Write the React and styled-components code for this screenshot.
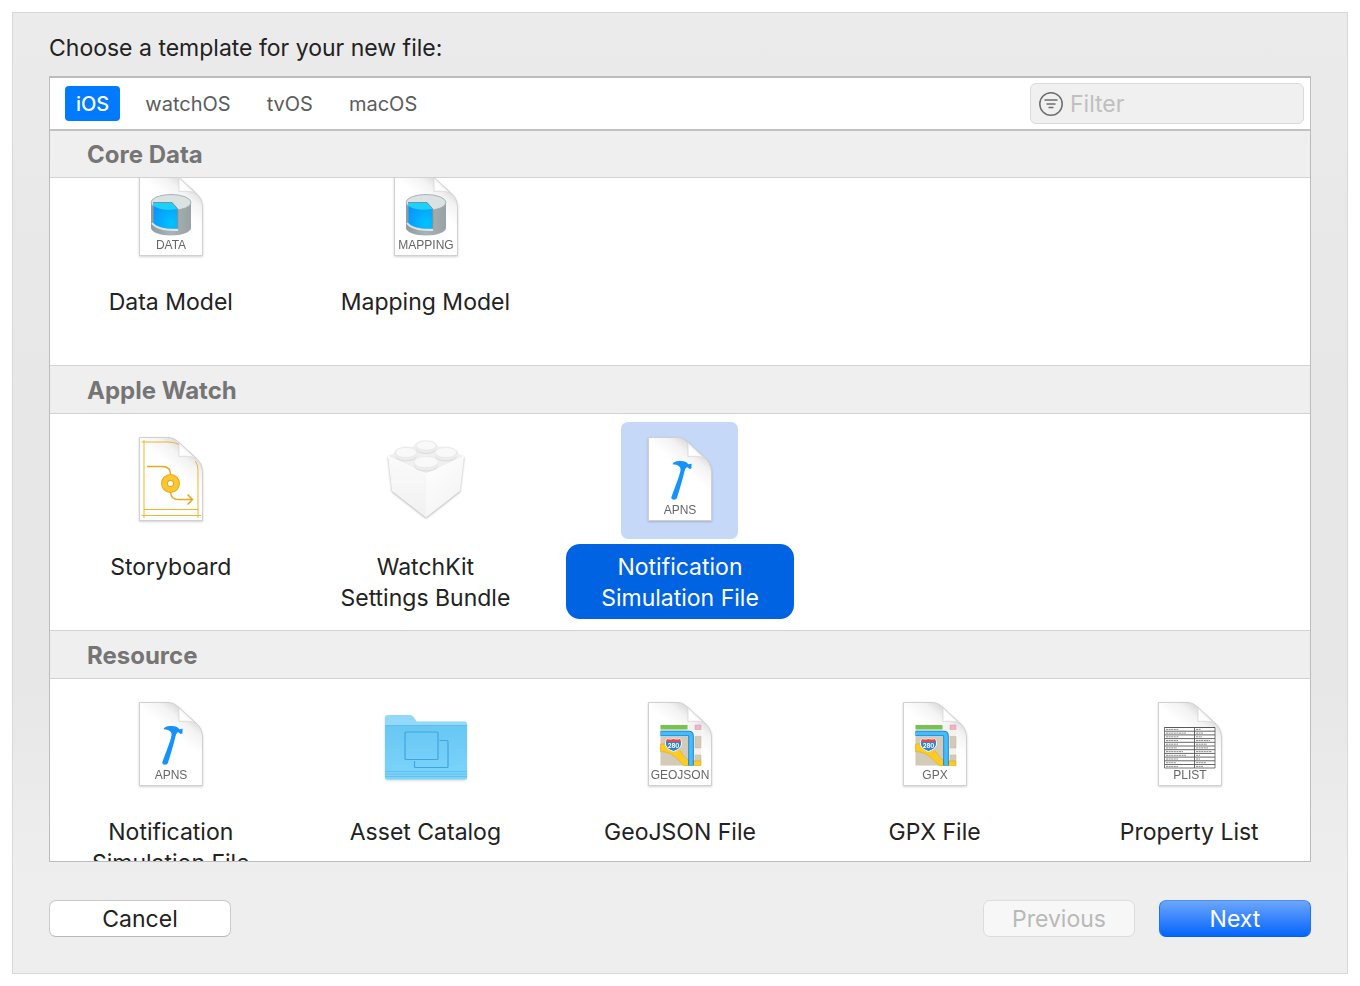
import styled, { createGlobalStyle, css } from "styled-components";
import { useLayoutEffect, useRef, useState } from "react";

const platforms = ["iOS", "watchOS", "tvOS", "macOS"];

// template sections
const sections = [
    {
        title: "Core Data",
        items: [
            { id: "data", name: "Data Model", icon: () => <DatabaseIcon tag="DATA" /> },
            { id: "mapping", name: "Mapping Model", icon: () => <DatabaseIcon tag="MAPPING" /> },
        ],
    },
    {
        title: "Apple Watch",
        items: [
            { id: "storyboard", name: "Storyboard", icon: () => <StoryboardIcon /> },
            { id: "bundle", name: "WatchKit Settings Bundle", icon: () => <BrickIcon /> },
            { id: "watch-apns", name: "Notification Simulation File", icon: () => <HammerIcon /> },
        ],
    },
    {
        title: "Resource",
        items: [
            { id: "apns", name: "Notification Simulation File", icon: () => <HammerIcon /> },
            { id: "assets", name: "Asset Catalog", icon: () => <FolderIcon /> },
            { id: "geojson", name: "GeoJSON File", icon: () => <MapIcon tag="GEOJSON" /> },
            { id: "gpx", name: "GPX File", icon: () => <MapIcon tag="GPX" /> },
            { id: "plist", name: "Property List", icon: () => <PlistIcon /> },
        ],
    },
];

const App = () => {
    const [platform, setPlatform] = useState("iOS");
    const [selected, setSelected] = useState("watch-apns");
    const listRef = useRef();

    useLayoutEffect(() => {
        listRef.current.scrollTop = 29;
    }, []);

    return (
        <>
            <GlobalStyle />
            <IconDefs />
            <Dialog>
                <Title>Choose a template for your new file:</Title>

                <Panel>
                    <Toolbar>
                        <Tabs>
                            {platforms.map((p) => (
                                <Tab key={p} type="button" $active={p === platform} onClick={() => setPlatform(p)}>
                                    {p}
                                </Tab>
                            ))}
                        </Tabs>
                        <FilterBox>
                            <FilterIcon />
                            <FilterInput type="text" placeholder="Filter" aria-label="Filter" />
                        </FilterBox>
                    </Toolbar>

                    <TemplateList ref={listRef}>
                        {sections.map((section) => (
                            <section key={section.title}>
                                <SectionTitle>{section.title}</SectionTitle>
                                <Grid>
                                    {section.items.map((item) => (
                                        <Template
                                            key={item.id}
                                            type="button"
                                            aria-pressed={item.id === selected}
                                            onClick={() => setSelected(item.id)}
                                        >
                                            <Thumb $active={item.id === selected}>{item.icon()}</Thumb>
                                            <Label $active={item.id === selected}>
                                                <LabelText>{item.name}</LabelText>
                                            </Label>
                                        </Template>
                                    ))}
                                </Grid>
                            </section>
                        ))}
                    </TemplateList>
                </Panel>

                <Footer>
                    <CancelButton type="button">Cancel</CancelButton>
                    <FooterRight>
                        <PushButton type="button" disabled>Previous</PushButton>
                        <NextButton type="button">Next</NextButton>
                    </FooterRight>
                </Footer>
            </Dialog>
        </>
    );
};

export default App;

// shared gradients
const IconDefs = () => (
    <DefsSvg aria-hidden="true">
        <defs>
            <linearGradient id="paper" gradientUnits="userSpaceOnUse" x1="77" y1="27" x2="61" y2="47">
                <stop offset="0" stopColor="#d9d9d9" />
                <stop offset="0.4" stopColor="#f3f3f3" />
                <stop offset="1" stopColor="#ffffff" />
            </linearGradient>
            <linearGradient id="curl" gradientUnits="userSpaceOnUse" x1="67" y1="36" x2="76" y2="27">
                <stop offset="0" stopColor="#ffffff" />
                <stop offset="0.7" stopColor="#fdfdfd" />
                <stop offset="1" stopColor="#e4e4e4" />
            </linearGradient>
            <linearGradient id="tank" x1="0" y1="0" x2="1" y2="0">
                <stop offset="0" stopColor="#8f9c9f" />
                <stop offset="0.5" stopColor="#a9b3b5" />
                <stop offset="1" stopColor="#98a2a4" />
            </linearGradient>
            <radialGradient id="water" cx="0.75" cy="0.8" r="0.9">
                <stop offset="0" stopColor="#00c4ff" />
                <stop offset="1" stopColor="#0b92fb" />
            </radialGradient>
            <linearGradient id="folder" x1="0" y1="0" x2="0" y2="1">
                <stop offset="0" stopColor="#68c7f4" />
                <stop offset="1" stopColor="#7dd4fa" />
            </linearGradient>
            <linearGradient id="brickLeft" x1="0" y1="0" x2="0" y2="1">
                <stop offset="0" stopColor="#fafafa" />
                <stop offset="1" stopColor="#f1f1f1" />
            </linearGradient>
            <linearGradient id="brickRight" x1="0" y1="0" x2="0.6" y2="1">
                <stop offset="0" stopColor="#ffffff" />
                <stop offset="1" stopColor="#f3f3f3" />
            </linearGradient>
        </defs>
    </DefsSvg>
);

// blank document with a curled corner
const Page = ({ tag, children }) => (
    <PageSvg viewBox="0 0 117 117" aria-hidden="true">
        <path
            d="M27.5 15.5H56C61 15.5 64 18 67 20.5L83.5 35.5C88.5 40 90.5 45 90.5 51V98.5H27.5Z"
            fill="url(#paper)"
            stroke="#d0d0d0"
        />
        {children}
        <path d="M67 20.5V34.5C74 34 80 34 84.5 37Z" fill="url(#curl)" stroke="#d2d2d2" strokeWidth="0.7" />
        {tag && <PageTag x="59" y="92">{tag}</PageTag>}
    </PageSvg>
);

const DatabaseIcon = ({ tag }) => (
    <Page tag={tag}>
        <path d="M39 45.5V71C39 75 48 78.5 59 78.5S79 75 79 71V45.5Z" fill="url(#tank)" />
        <ellipse cx="59" cy="45.5" rx="20" ry="8" fill="#dbe2e4" stroke="#97a3a6" strokeWidth="0.8" />
        <path d="M40 66C44 71.5 53 73.5 66 73" fill="none" stroke="#d6e6ec" strokeWidth="2" />
        <path d="M41.5 45.5H60L65.5 52V71.5C54 72 45 70 41.5 66Z" fill="url(#water)" />
        <path d="M41.5 45.5H60L65.5 52C55 53.5 46 52.5 41.5 49Z" fill="#1bd2ff" />
        <path d="M41 45.5H60L65.8 52V71.5" fill="none" stroke="#7d8b90" strokeWidth="0.9" />
    </Page>
);

const StoryboardIcon = () => (
    <Page>
        <g fill="none" stroke="#edb72c">
            <path d="M32 18V96M29.5 20H56Q62 20 67 22.5M29.5 93.5H89M32 87.5H86M86 96V48Q86 43 83.5 39" />
            <path
                d="M35 44.5H50C56 44.5 58.5 47 58.5 52M58.5 70C59 75 61 77.5 66 77.5H80M75.5 72.5L80.5 77.5L75.5 82.5"
                stroke="#e5aa1f"
                strokeWidth="1.5"
            />
        </g>
        <circle cx="58.5" cy="61.5" r="6" fill="#ffffff" stroke="#e3a81c" strokeWidth="7" />
        <circle cx="58.5" cy="61.5" r="6" fill="none" stroke="#fcc72f" strokeWidth="5" />
    </Page>
);

const HammerIcon = () => (
    <Page tag="APNS">
        <path
            d="M51.5 42.3C52 40.5 54.5 39 58 39C62.5 38.6 65.500 39.500 67.300 42.200L70.600 41.800L70.400 46.600L68.500 47L66.600 45.300C65 45.300 64.300 46.600 63.600 49C61.500 58 58.700 67 56 75.800C55.300 78.400 50 78.200 50.300 75.600C53 67 58 56 59.600 48C59.800 44.500 57 42.800 51.500 42.300Z"
            fill="#1593fb"
        />
    </Page>
);

const roadNumber = "280";

const MapIcon = ({ tag }) => (
    <Page tag={tag}>
        <path d="M39.5 38H80V78.5H39.5Z" fill="#f4f2ee" />
        <path d="M39.5 50H67V78.5H39.5Z" fill="#d3cbb8" />
        <path d="M74 49.5H80V61H74ZM74 68H80V74H74Z" fill="#d3cbb8" stroke="#bdb5a2" strokeWidth="0.5" />
        <path d="M39.5 38H66.5V42.5H39.5Z" fill="#79c24d" />
        <path d="M74 38H80V42.5H74Z" fill="#edb5c4" stroke="#c99aa7" strokeWidth="0.5" />
        <path
            d="M39.5 57C50 56.5 56 59.500 60 65C63 70 66 74 72 74H80V78.5H63C56 72 52 65 39.5 64.5Z"
            fill="#fdcb22"
            stroke="#e0a91a"
            strokeWidth="0.6"
        />
        <path d="M39.5 46.5H67.500Q70 46.5 70 49V78.5" fill="none" stroke="#1672b5" strokeWidth="5.5" />
        <path d="M39.5 46.5H67.500Q70 46.5 70 49V78.5" fill="none" stroke="#42bdff" strokeWidth="3.8" />
        <path d="M46 52Q49 53 52.5 52Q56 53 59 52C62 56 61 62 52.5 64.5C44 62 43 56 46 52Z" fill="#3183d2" stroke="#ffffff" />
        <path d="M46 52Q49 53 52.5 52Q56 53 59 52L60 55H45Z" fill="#e5484e" />
        <RoadText x="52.5" y="60.5">{roadNumber}</RoadText>
    </Page>
);

// width of the key and of the value in each row
const plistRows = [
    [13, 5], [20, 7], [13, 6], [12, 14], [12, 11], [11, 12], [17, 16], [20, 4], [12, 4], [10, 10], [12, 7],
];

const PlistIcon = () => (
    <Page tag="PLIST">
        <path d="M33.5 40.5H84V81H33.5Z" fill="#ffffff" stroke="#555555" strokeWidth="0.8" />
        {plistRows.map(([a, b], i) => {
            const y = 40.5 + i * 3.7;
            return (
                <g key={i} fill="none">
                    <path d={`M33.5 ${y}H84`} stroke="#555555" strokeWidth="0.9" />
                    <path d={`M35 ${y + 1.9}h${a}M65 ${y + 1.9}h${b}`} stroke="#8c8c8c" strokeDasharray="2 0.6" />
                </g>
            );
        })}
        <path d="M63.5 40.5V81" stroke="#555555" strokeWidth="0.9" />
    </Page>
);

const brickStuds = [
    [59, 23.5, 10, 4.5],
    [39, 30.5, 10.5, 5],
    [79, 30.5, 10.5, 5],
    [59, 40, 12, 5.5],
];

const BrickIcon = () => (
    <BrickSvg viewBox="0 0 117 117" aria-hidden="true">
        <path d="M21 34.5L59 20L97 34.5L59 52Z" fill="#f0f0f0" />
        <path d="M21 34.5L59 52V95.5L25 69Z" fill="url(#brickLeft)" />
        <path d="M97 34.5L59 52V95.5L93 69Z" fill="url(#brickRight)" />
        <path d="M21 34.5L59 52L97 34.5" fill="none" stroke="#ffffff" />
        {brickStuds.map(([x, y, rx, ry]) => (
            <g key={`${x}-${y}`}>
                <ellipse cx={x} cy={y + 4} rx={rx} ry={ry} fill="#dadada" />
                <ellipse cx={x} cy={y + 3} rx={rx} ry={ry} fill="#ececec" />
                <ellipse cx={x} cy={y} rx={rx} ry={ry} fill="#f9f9f9" stroke="#e6e6e6" strokeWidth="0.6" />
            </g>
        ))}
    </BrickSvg>
);

const FolderIcon = () => (
    <PageSvg viewBox="0 0 117 117" aria-hidden="true">
        <path d="M18 31Q18 28 21 28H43Q45 28 46.5 30L49.5 34.5H97.5Q100 34.5 100 37V60H18Z" fill="#93d9fa" />
        <path d="M18 38.5H100V90Q100 92.5 97.5 92.5H20.5Q18 92.5 18 90Z" fill="url(#folder)" />
        <path d="M18 38.5H100" stroke="#5ab8e8" strokeWidth="0.8" />
        <path d="M18 84.5H100M18 87H100M18 89.5H100" stroke="#5dbdea" strokeWidth="0.8" />
        <g fill="none" stroke="#3fa5dc" strokeWidth="1.2">
            <rect x="38" y="45" width="33" height="27.5" rx="1" />
            <path d="M72.5 53.5H80Q81 53.5 81 54.5V79.5Q81 80.5 80 80.5H48.5Q47.5 80.5 47.5 79.5V74" />
        </g>
    </PageSvg>
);

const FilterIcon = () => (
    <FilterSvg viewBox="0 0 24 24" aria-hidden="true">
        <circle cx="12" cy="12" r="11.2" />
        <path d="M5.5 8H18.5M7.5 12H16.5M9.5 15.5H14.5" />
    </FilterSvg>
);

const GlobalStyle = createGlobalStyle`
    * {
        box-sizing: border-box;
    }
    body {
        margin: 12px;
        background-color: #ffffff;
        color: #222222;
        font-family: Inter, "Liberation Sans", sans-serif;
        font-size: 23px;
    }
    button, input {
        font: inherit;
        color: inherit;
    }
`;

const DefsSvg = styled.svg`
    position: absolute;
    width: 0;
    height: 0;
`;

const Dialog = styled.main`
    display: flex;
    flex-direction: column;
    height: calc(100vh - 24px);
    padding: 19px 36px 36px;
    border: 1px solid #d8d8d8;
    background: linear-gradient(#ebebeb, #e7e7e7 40%, #e8e7e7 70%, #eeeeee 90%);
`;

const Title = styled.h1`
    margin: 0 0 12px;
    font-size: 23px;
    font-weight: 400;
    line-height: 32px;
`;

const Panel = styled.div`
    flex: 1;
    min-height: 0;
    display: flex;
    flex-direction: column;
    border: 1px solid #bcbcbc;
    border-top-width: 2px;
    background-color: #ffffff;
`;

const Toolbar = styled.div`
    display: flex;
    justify-content: space-between;
    align-items: center;
    height: 53px;
    padding: 0 6px 0 15px;
    border-bottom: 2px solid #c2c2c2;
`;

const Tabs = styled.div`
    display: flex;
    gap: 14px;
`;

const Tab = styled.button`
    height: 35px;
    padding: 0 11px;
    border: none;
    border-radius: 4px;
    background-color: transparent;
    color: #5c5c5c;
    font-size: 20px;
    ${({ $active }) => $active && css`
        background-color: #007aff;
        color: #ffffff;
        font-weight: 500;
    `}
`;

const FilterBox = styled.div`
    display: flex;
    align-items: center;
    gap: 7px;
    width: 274px;
    height: 41px;
    padding: 0 8px;
    border: 1px solid #dadada;
    border-radius: 6px;
    background-color: #f0f0f0;
`;

const FilterSvg = styled.svg`
    flex: none;
    width: 24px;
    height: 24px;
    fill: none;
    stroke: #6e6e6e;
    stroke-width: 1.5;
`;

const FilterInput = styled.input`
    flex: 1;
    min-width: 0;
    padding: 0;
    border: none;
    outline: none;
    background-color: transparent;
    &::placeholder {
        color: #bfbfbf;
        opacity: 1;
    }
`;

const TemplateList = styled.div`
    flex: 1;
    min-height: 0;
    overflow-y: auto;
    scrollbar-width: none;
`;

const SectionTitle = styled.h2`
    position: sticky;
    top: 0;
    z-index: 1;
    margin: 0;
    padding: 2px 37px 0;
    border-bottom: 1px solid #d2d2d2;
    background-color: #efefef;
    color: #757575;
    font-size: 24px;
    font-weight: 700;
    line-height: 44px;
    section + section > & {
        padding-top: 3px;
        border-top: 1px solid #d2d2d2;
    }
`;

const Grid = styled.div`
    display: grid;
    grid-template-columns: repeat(5, 1fr);
    gap: 27px;
    min-height: 216px;
    padding: 8px 7px 10px;
`;

const Template = styled.button`
    display: flex;
    flex-direction: column;
    align-items: center;
    gap: 5px;
    padding: 0;
    border: none;
    background: none;
`;

const Thumb = styled.span`
    width: 117px;
    height: 117px;
    border-radius: 7px;
    background-color: ${({ $active }) => ($active ? "#c5d8f7" : "transparent")};
`;

const Label = styled.span`
    display: flex;
    justify-content: center;
    width: 100%;
    padding: 8px 20px 5px;
    border-radius: 14px;
    line-height: 31px;
    ${({ $active }) => $active && css`
        background-color: #0063e1;
        color: #ffffff;
    `}
`;

const LabelText = styled.span`
    max-width: 180px;
`;

const PageSvg = styled.svg`
    display: block;
    width: 100%;
    height: 100%;
    filter: drop-shadow(0 1px 1px rgba(0, 0, 0, 0.18));
`;

const BrickSvg = styled(PageSvg)`
    filter: drop-shadow(0 1px 1px rgba(0, 0, 0, 0.3));
`;

const PageTag = styled.text`
    fill: #666666;
    font-family: "Liberation Sans", sans-serif;
    font-size: 12px;
    text-anchor: middle;
`;

const RoadText = styled.text`
    fill: #ffffff;
    font-size: 6px;
    font-weight: 700;
    text-anchor: middle;
`;

const Footer = styled.div`
    display: flex;
    justify-content: space-between;
    margin-top: 38px;
`;

const FooterRight = styled.div`
    display: flex;
    gap: 24px;
`;

const PushButton = styled.button`
    width: 152px;
    height: 37px;
    padding: 2px 0 0;
    border: 1px solid #c9c9c9;
    border-bottom-color: #b8b8b8;
    border-radius: 7px;
    background-color: #ffffff;
    line-height: 33px;
    &:disabled {
        border-color: #dcdcdc;
        background-color: #f7f7f7;
        color: #b9b9b9;
    }
`;

const CancelButton = styled(PushButton)`
    width: 182px;
`;

const NextButton = styled(PushButton)`
    border-color: #4b8ef5 #1a72f8 #0a5fe8;
    background: linear-gradient(#6ca6fb, #0565fe);
    color: #ffffff;
`;
